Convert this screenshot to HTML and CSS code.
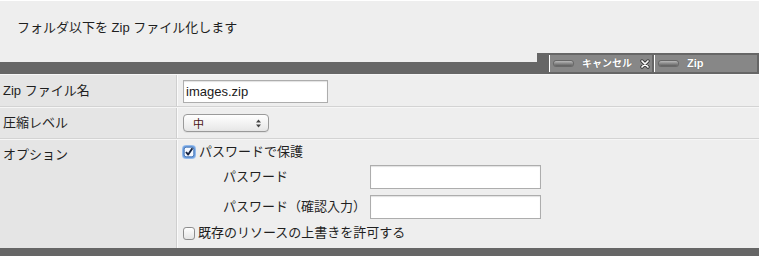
FILE: index.html
```html
<!DOCTYPE html>
<html lang="ja">
<head>
<meta charset="utf-8">
<title>Zip</title>
<link rel="stylesheet" href="styles.css">
</head>
<body>
<div class="page">
  <header class="intro">フォルダ以下を Zip ファイル化します</header>
  <div class="toolbar">
    <div class="actions">
      <button class="btn" type="button">
        <span class="pill"></span><span class="btn-label jp">キャンセル</span>
        <svg class="close" width="10" height="10" viewBox="0 0 10 10"><path d="M2 2 L8 8 M8 2 L2 8" stroke="#3a3a3a" stroke-width="3.4" stroke-linecap="round"/><path d="M2 2 L8 8 M8 2 L2 8" stroke="#fff" stroke-width="1.7" stroke-linecap="round"/></svg>
      </button>
      <button class="btn" type="button">
        <span class="pill"></span><span class="btn-label">Zip</span>
      </button>
    </div>
  </div>
  <div class="form">
    <div class="row row-name">
      <div class="label">Zip ファイル名</div>
      <div class="value"><input class="text name" type="text" value="images.zip"></div>
    </div>
    <div class="row row-level">
      <div class="label">圧縮レベル</div>
      <div class="value">
        <span class="select-wrap">
          <select class="level"><option>中</option></select>
          <svg class="arrows" width="5" height="9" viewBox="0 0 5 9"><path d="M0 3.4 L2.5 0.4 L5 3.4Z M0 5.6 L2.5 8.6 L5 5.6Z" fill="#444"/></svg>
        </span>
      </div>
    </div>
    <div class="row row-options">
      <div class="label label-top">オプション</div>
      <div class="value value-stack">
        <label class="check check-on">
          <svg width="14" height="14" viewBox="0 0 14 14">
            <rect x="0" y="0" width="14" height="14" rx="4" fill="#9cc0ee"/>
            <rect x="0.8" y="0.8" width="12.4" height="12.4" rx="3.4" fill="#6fa0e0"/>
            <rect x="2.2" y="2.2" width="9.6" height="9.6" rx="2" fill="#f4f8ff" stroke="#3f6fb0" stroke-width="0.9"/>
            <path d="M4 7 L6.2 9.6 L10.4 3.2" fill="none" stroke="#16233f" stroke-width="1.9" stroke-linejoin="round"/>
          </svg>
          <span>パスワードで保護</span>
        </label>
        <div class="pw-row">
          <span class="pw-label">パスワード</span>
          <input class="text pw" type="password">
        </div>
        <div class="pw-row pw-row-2">
          <span class="pw-label">パスワード（確認入力）</span>
          <input class="text pw" type="password">
        </div>
        <label class="check check-off">
          <svg width="12" height="13" viewBox="0 0 12 13">
            <defs><linearGradient id="cb" x1="0" y1="0" x2="0" y2="1"><stop offset="0" stop-color="#ffffff"/><stop offset="1" stop-color="#e4e4e4"/></linearGradient></defs>
            <rect x="0.5" y="0.5" width="11" height="12" rx="2.6" fill="url(#cb)" stroke="#8c8c8c"/>
          </svg>
          <span>既存のリソースの上書きを許可する</span>
        </label>
      </div>
    </div>
  </div>
  <div class="footer"></div>
</div>
</body>
</html>
```

FILE: styles.css
```css
* { box-sizing: border-box; }

html, body {
  margin: 0;
  padding: 0;
  background: #eeeeee;
}

body {
  font-family: "Liberation Sans", "Noto Sans CJK JP", sans-serif;
  font-size: 13px;
  color: #1f1f1f;
  width: 759px;
  height: 256px;
  overflow: hidden;
}

.page {
  display: flex;
  flex-direction: column;
  height: 256px;
}

.intro {
  height: 62px;
  border-top: 1px solid #ffffff;
  padding: 18px 0 0 17px;
  line-height: 17px;
  background: #eeeeee;
}

.toolbar {
  height: 12px;
  background: #666666;
  display: flex;
  justify-content: flex-end;
  align-items: flex-end;
}

.actions {
  width: 222px;
  height: 21px;
  background: #666666;
  padding: 2px 2px 2px 12px;
  display: flex;
  gap: 2px;
}

.btn {
  width: 103px;
  height: 17px;
  margin: 0;
  padding: 0 0 0 4px;
  border: 0;
  border-left: 1px solid #ffffff;
  background: #878787;
  display: flex;
  align-items: center;
  color: #ffffff;
  font-family: "Liberation Sans", "Noto Sans CJK JP", sans-serif;
  font-weight: bold;
  font-size: 11px;
  line-height: 17px;
  text-shadow: 0 0 1px rgba(0, 0, 0, 0.35);
  cursor: pointer;
}

.pill {
  width: 19px;
  height: 5px;
  border-radius: 3px;
  background: linear-gradient(#b9b9b9, #8a8a8a 50%, #5e5e5e);
  box-shadow: 0 0 0 1px rgba(80, 80, 80, 0.55);
  margin-top: -1px;
}

.btn-label {
  margin-left: 9px;
}

.btn-label.jp {
  font-size: 10px;
}

.close {
  margin-left: 8px;
}

.form {
  display: flex;
  flex-direction: column;
}

.row {
  display: grid;
  grid-template-columns: 177px 1fr;
  border-top: 1px solid #f6f6f6;
  border-bottom: 1px solid #d3d3d3;
}

.row-name { height: 33px; }
.row-level { height: 32px; }
.row-options { height: 109px; border-bottom: 0; }

.label {
  background: #e5e5e5;
  border-right: 1px solid #cfcfcf;
  padding-left: 3px;
  display: flex;
  align-items: center;
  line-height: 18px;
}

.label-top {
  align-items: flex-start;
  padding-top: 6px;
}

.value {
  background: #eeeeee;
  border-left: 1px solid #fafafa;
  padding-left: 5px;
  display: flex;
  align-items: center;
}

.text {
  height: 23px;
  border: 1px solid #adadad;
  background: #ffffff;
  box-shadow: inset 0 1px 1px rgba(0, 0, 0, 0.12);
  font-family: "Liberation Sans", "Noto Sans CJK JP", sans-serif;
  font-size: 13px;
  color: #1a1a1a;
  padding: 0 2px;
  margin: 0;
  outline: none;
}

.name {
  width: 145px;
  margin-top: 1px;
}

.select-wrap {
  position: relative;
  display: inline-block;
  width: 86px;
  height: 18px;
}

.level {
  appearance: none;
  -webkit-appearance: none;
  width: 86px;
  height: 18px;
  margin: 0;
  border: 1px solid #9a9a9a;
  border-radius: 4px;
  background: linear-gradient(#ffffff, #f3f3f3 50%, #e6e6e6);
  box-shadow: 0 1px 0 rgba(0, 0, 0, 0.06);
  padding: 0 0 0 9px;
  font-family: "Noto Sans CJK JP", sans-serif;
  font-size: 11px;
  line-height: 16px;
  color: #4a1414;
}

.arrows {
  position: absolute;
  right: 8px;
  top: 5px;
}

.value-stack {
  flex-direction: column;
  align-items: flex-start;
  justify-content: flex-start;
  padding-top: 3px;
}

.check {
  display: flex;
  align-items: center;
  height: 18px;
  line-height: 18px;
  gap: 3px;
}

.check-on svg {
  margin-left: -1px;
}

.check-off {
  margin-top: 5px;
}

.pw-row {
  display: flex;
  align-items: center;
  margin-top: 4px;
  padding-left: 40px;
}

.pw-row-2 {
  margin-top: 6px;
}

.pw-label {
  width: 147px;
  line-height: 18px;
}

.pw {
  width: 171px;
  height: 24px;
}

.footer {
  flex: 1;
  background: #666666;
}
```
